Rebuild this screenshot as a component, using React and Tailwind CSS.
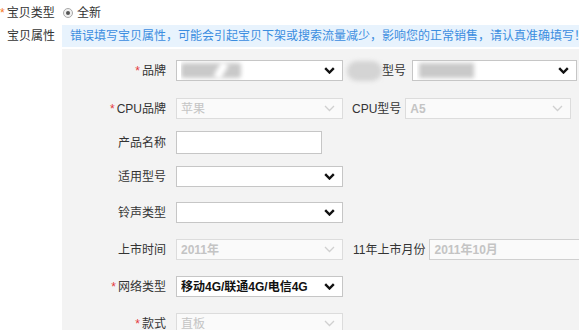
import React from "react";

const font = {
  fontFamily: '"Liberation Sans", "Noto Sans CJK SC", sans-serif',
};

const Chevron = ({ disabled }) =>
  disabled ? (
    <svg width="11" height="7" viewBox="0 0 11 7" className="shrink-0">
      <path d="M1 1l4.5 4.5L10 1" fill="none" stroke="#d0d0d0" strokeWidth="1.3" />
    </svg>
  ) : (
    <svg width="11" height="7" viewBox="0 0 11 7" className="shrink-0">
      <path d="M1.2 1.2l4.3 4.3 4.3-4.3" fill="none" stroke="#111" strokeWidth="2.4" />
    </svg>
  );

const Select = ({ width = "w-[167px]", value, disabled, bold, children }) => (
  <div
    className={`${width} h-[21px] flex items-center justify-between pl-[4px] pr-[7px] border ${
      disabled ? "border-[#dcdcdc] bg-[#fafafa] text-[#c4c4c4]" : "border-[#c6c6c6] bg-white text-[#111]"
    } ${bold ? "font-bold" : ""}`}
  >
    <div className="relative flex-1 h-full flex items-center overflow-hidden whitespace-nowrap">
      {value}
      {children}
    </div>
    <Chevron disabled={disabled} />
  </div>
);

const Label = ({ req, children }) => (
  <div className="w-[104px] shrink-0 text-right pr-0 text-[#333] whitespace-nowrap">
    {req && <span className="text-[#e4393c] mr-[2px]">*</span>}
    {children}
  </div>
);

const Row = ({ mt, children }) => (
  <div className={`flex items-center ${mt}`}>{children}</div>
);

export default function App() {
  return (
    <div
      className="w-[579px] h-[330px] overflow-hidden bg-white text-[12px] leading-none"
      style={font}
    >
      <div className="flex items-center h-[25px]">
        <div className="w-[62px] text-[#333] whitespace-nowrap">
          <span className="text-[#f5761f] mr-[2px]">*</span>宝贝类型
        </div>
        <div className="ml-[1px] w-[10px] h-[10px] rounded-full border border-[#a8a8a8] bg-[#f0f0f0] flex items-center justify-center">
          <div className="w-[4px] h-[4px] rounded-full bg-[#555]" />
        </div>
        <span className="ml-[4px] text-[#333]">全新</span>
      </div>

      <div className="flex">
        <div className="w-[62px] shrink-0 pl-[7px] pt-[5px] text-[#333]">宝贝属性</div>
        <div className="flex-1 overflow-hidden">
          <div className="h-[22px] bg-[#e8f3fd] flex items-center pl-[8px] text-[#3b8de0] whitespace-nowrap">
            错误填写宝贝属性，可能会引起宝贝下架或搜索流量减少，影响您的正常销售，请认真准确填写！
          </div>
          <div className="mt-[2px] h-[290px] bg-[#f3f3f3] flex flex-col">
            <Row mt="mt-[11px]">
              <Label req>品牌</Label>
              <div className="ml-[10px]">
                <Select>
                  <div className="absolute left-[0px] top-[2px] w-[60px] h-[15px] rounded-[3px] bg-[#c9c9c9] blur-[2px]" />
                  <div className="absolute left-[36px] top-[1px] w-[8px] h-[17px] bg-white blur-[2px] rotate-[30deg]" />
                </Select>
              </div>
              <div className="ml-[4px] w-[35px] h-[20px] rounded-full bg-[#d4d4d4] blur-[2px]" />
              <span className="text-[#333] whitespace-nowrap">型号</span>
              <div className="ml-[6px]">
                <Select width="w-[165px]">
                  <div className="absolute left-[2px] top-[2px] w-[55px] h-[15px] bg-[#c9c9c9] blur-[2px]" />
                </Select>
              </div>
            </Row>

            <Row mt="mt-[17px]">
              <Label req>CPU品牌</Label>
              <div className="ml-[10px]">
                <Select value="苹果" disabled />
              </div>
              <span className="ml-[9px] text-[#333] whitespace-nowrap">CPU型号</span>
              <div className="ml-[4px]">
                <Select width="w-[166px]" value="A5" disabled bold />
              </div>
            </Row>

            <Row mt="mt-[12px]">
              <Label>产品名称</Label>
              <div className="ml-[10px] w-[146px] h-[23px] border border-[#c6c6c6] bg-white" />
            </Row>

            <Row mt="mt-[12px]">
              <Label>适用型号</Label>
              <div className="ml-[10px]">
                <Select />
              </div>
            </Row>

            <Row mt="mt-[15px]">
              <Label>铃声类型</Label>
              <div className="ml-[10px]">
                <Select />
              </div>
            </Row>

            <Row mt="mt-[16px]">
              <Label>上市时间</Label>
              <div className="ml-[10px]">
                <Select value="2011年" disabled bold />
              </div>
              <span className="ml-[10px] text-[#333] whitespace-nowrap">11年上市月份</span>
              <div className="ml-[4px] flex-1 h-[21px] border border-[#d0d0d0] border-r-0 bg-[#fafafa] flex items-center pl-[4px] text-[#c4c4c4] font-bold whitespace-nowrap">
                2011年10月
              </div>
            </Row>

            <Row mt="mt-[16px]">
              <Label req>网络类型</Label>
              <div className="ml-[10px]">
                <Select value="移动4G/联通4G/电信4G" bold />
              </div>
            </Row>

            <Row mt="mt-[16px]">
              <Label req>款式</Label>
              <div className="ml-[10px]">
                <Select value="直板" disabled />
              </div>
            </Row>
          </div>
        </div>
      </div>
    </div>
  );
}
